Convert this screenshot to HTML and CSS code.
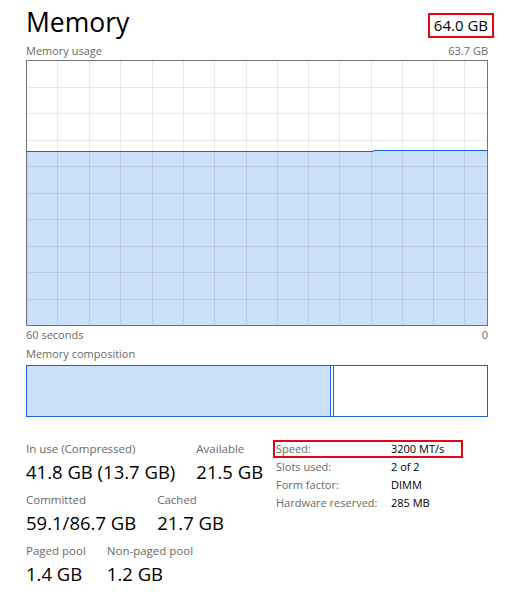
FILE: index.html
```html
<!DOCTYPE html>
<html lang="en">
<head>
<meta charset="utf-8">
<title>Memory</title>
<link rel="stylesheet" href="styles.css">
</head>
<body>
<main class="panel">
  <header class="header">
    <h1 class="title">Memory</h1>
    <span class="total"><span class="marked">64.0 GB</span></span>
  </header>

  <div class="axis-row axis-top">
    <span>Memory usage</span>
    <span>63.7 GB</span>
  </div>

  <svg class="chart" width="462" height="266" viewBox="0 0 462 266" xmlns="http://www.w3.org/2000/svg">
    <polygon class="fill" points="0,91 346,91 349,90 461,90 461,266 0,266"/>
    <g class="grid">
      <line x1="31.5" y1="0" x2="31.5" y2="266"/>
      <line x1="63.5" y1="0" x2="63.5" y2="266"/>
      <line x1="94.5" y1="0" x2="94.5" y2="266"/>
      <line x1="126.5" y1="0" x2="126.5" y2="266"/>
      <line x1="157.5" y1="0" x2="157.5" y2="266"/>
      <line x1="188.5" y1="0" x2="188.5" y2="266"/>
      <line x1="220.5" y1="0" x2="220.5" y2="266"/>
      <line x1="251.5" y1="0" x2="251.5" y2="266"/>
      <line x1="282.5" y1="0" x2="282.5" y2="266"/>
      <line x1="313.5" y1="0" x2="313.5" y2="266"/>
      <line x1="345.5" y1="0" x2="345.5" y2="266"/>
      <line x1="376.5" y1="0" x2="376.5" y2="266"/>
      <line x1="407.5" y1="0" x2="407.5" y2="266"/>
      <line x1="438.5" y1="0" x2="438.5" y2="266"/>
      <line x1="0" y1="27.5" x2="462" y2="27.5"/>
      <line x1="0" y1="53.5" x2="462" y2="53.5"/>
      <line x1="0" y1="80.5" x2="462" y2="80.5"/>
      <line x1="0" y1="106.5" x2="462" y2="106.5"/>
      <line x1="0" y1="133.5" x2="462" y2="133.5"/>
      <line x1="0" y1="159.5" x2="462" y2="159.5"/>
      <line x1="0" y1="186.5" x2="462" y2="186.5"/>
      <line x1="0" y1="212.5" x2="462" y2="212.5"/>
      <line x1="0" y1="239.5" x2="462" y2="239.5"/>
    </g>
    <polyline class="line" points="0.5,266 0.5,91.5 346,91.5 349,90.5 461,90.5"/>
    <rect class="frame" x="0.5" y="0.5" width="461" height="265"/>
  </svg>

  <div class="axis-row axis-bottom">
    <span>60 seconds</span>
    <span>0</span>
  </div>

  <div class="axis-label">Memory composition</div>

  <div class="composition">
    <div class="seg seg-inuse"></div>
    <div class="seg seg-modified"></div>
    <div class="seg seg-rest"></div>
  </div>

  <section class="stats">
    <div class="stats-left">
      <div class="stat-row">
        <div class="stat">
          <div class="stat-label">In use (Compressed)</div>
          <div class="stat-value">41.8 GB (13.7 GB)</div>
        </div>
        <div class="stat">
          <div class="stat-label">Available</div>
          <div class="stat-value">21.5 GB</div>
        </div>
      </div>
      <div class="stat-row">
        <div class="stat">
          <div class="stat-label">Committed</div>
          <div class="stat-value">59.1/86.7 GB</div>
        </div>
        <div class="stat">
          <div class="stat-label">Cached</div>
          <div class="stat-value">21.7 GB</div>
        </div>
      </div>
      <div class="stat-row">
        <div class="stat">
          <div class="stat-label">Paged pool</div>
          <div class="stat-value">1.4 GB</div>
        </div>
        <div class="stat">
          <div class="stat-label">Non-paged pool</div>
          <div class="stat-value">1.2 GB</div>
        </div>
      </div>
    </div>

    <dl class="specs">
      <div class="spec spec-marked"><dt>Speed:</dt><dd>3200 MT/s</dd></div>
      <div class="spec"><dt>Slots used:</dt><dd>2 of 2</dd></div>
      <div class="spec"><dt>Form factor:</dt><dd>DIMM</dd></div>
      <div class="spec"><dt>Hardware reserved:</dt><dd>285 MB</dd></div>
    </dl>
  </section>
</main>
</body>
</html>
```

FILE: styles.css
```css
* { box-sizing: border-box; }

html, body {
  margin: 0;
  padding: 0;
  background: #ffffff;
}

body {
  font-family: "Open Sans", "Noto Sans", sans-serif;
  color: #000;
}

.panel {
  width: 462px;
  margin-left: 26px;
  display: flex;
  flex-direction: column;
}

.header {
  display: flex;
  justify-content: space-between;
  align-items: flex-start;
  height: 44px;
}

.title {
  margin: 4px 0 0;
  font-size: 26.5px;
  font-weight: 400;
  line-height: 36px;
}

.total {
  margin-top: 19px;
  font-size: 15px;
  line-height: 13px;
}

.marked {
  display: inline-block;
  line-height: 13px;
  outline: 2px solid #e30613;
  outline-offset: 4px;
}

.axis-row {
  display: flex;
  justify-content: space-between;
  font-size: 11px;
  line-height: 14px;
  color: #6a6a6a;
}

.axis-top {
  margin-bottom: 2px;
}

.axis-bottom {
  margin-top: 2px;
}

.axis-label {
  font-size: 11px;
  line-height: 14px;
  color: #6a6a6a;
  margin-top: 5px;
  margin-bottom: 4px;
}

.chart {
  display: block;
}

.chart .fill { fill: #cce0fc; }
.chart .grid line { stroke: rgba(0, 0, 0, 0.09); stroke-width: 1; }
.chart .line { fill: none; stroke: #1662d8; stroke-width: 1.2; }
.chart .frame { fill: none; stroke: #747474; stroke-width: 1; }

.composition {
  display: flex;
  height: 52px;
  border: 1px solid #1662d8;
}

.seg { height: 100%; }

.seg-inuse {
  width: 304px;
  background: #cce0fc;
  border-right: 1px solid #1662d8;
}

.seg-modified {
  width: 3px;
  border-right: 1px solid #1662d8;
  background: #ffffff;
}

.seg-rest {
  flex: 1;
}

.stats {
  display: flex;
  margin-top: 24px;
}

.stats-left {
  display: flex;
  flex-direction: column;
  gap: 5px;
  width: 247px;
}

.stat-row {
  display: flex;
  gap: 21px;
}

.stat-label {
  font-size: 11.5px;
  line-height: 16px;
  color: #6a6a6a;
}

.stat-value {
  font-size: 18.5px;
  line-height: 30px;
  color: #000;
}

.specs {
  margin: 0;
  margin-top: -1px;
  width: 190px;
  display: flex;
  flex-direction: column;
}

.spec {
  display: grid;
  grid-template-columns: 115px 1fr;
  padding-left: 3px;
  font-size: 11px;
  line-height: 18px;
}

.spec dt {
  color: #6a6a6a;
}

.spec dd {
  margin: 0;
  color: #000;
}

.spec-marked {
  outline: 2px solid #e30613;
  outline-offset: -2px;
}
```
